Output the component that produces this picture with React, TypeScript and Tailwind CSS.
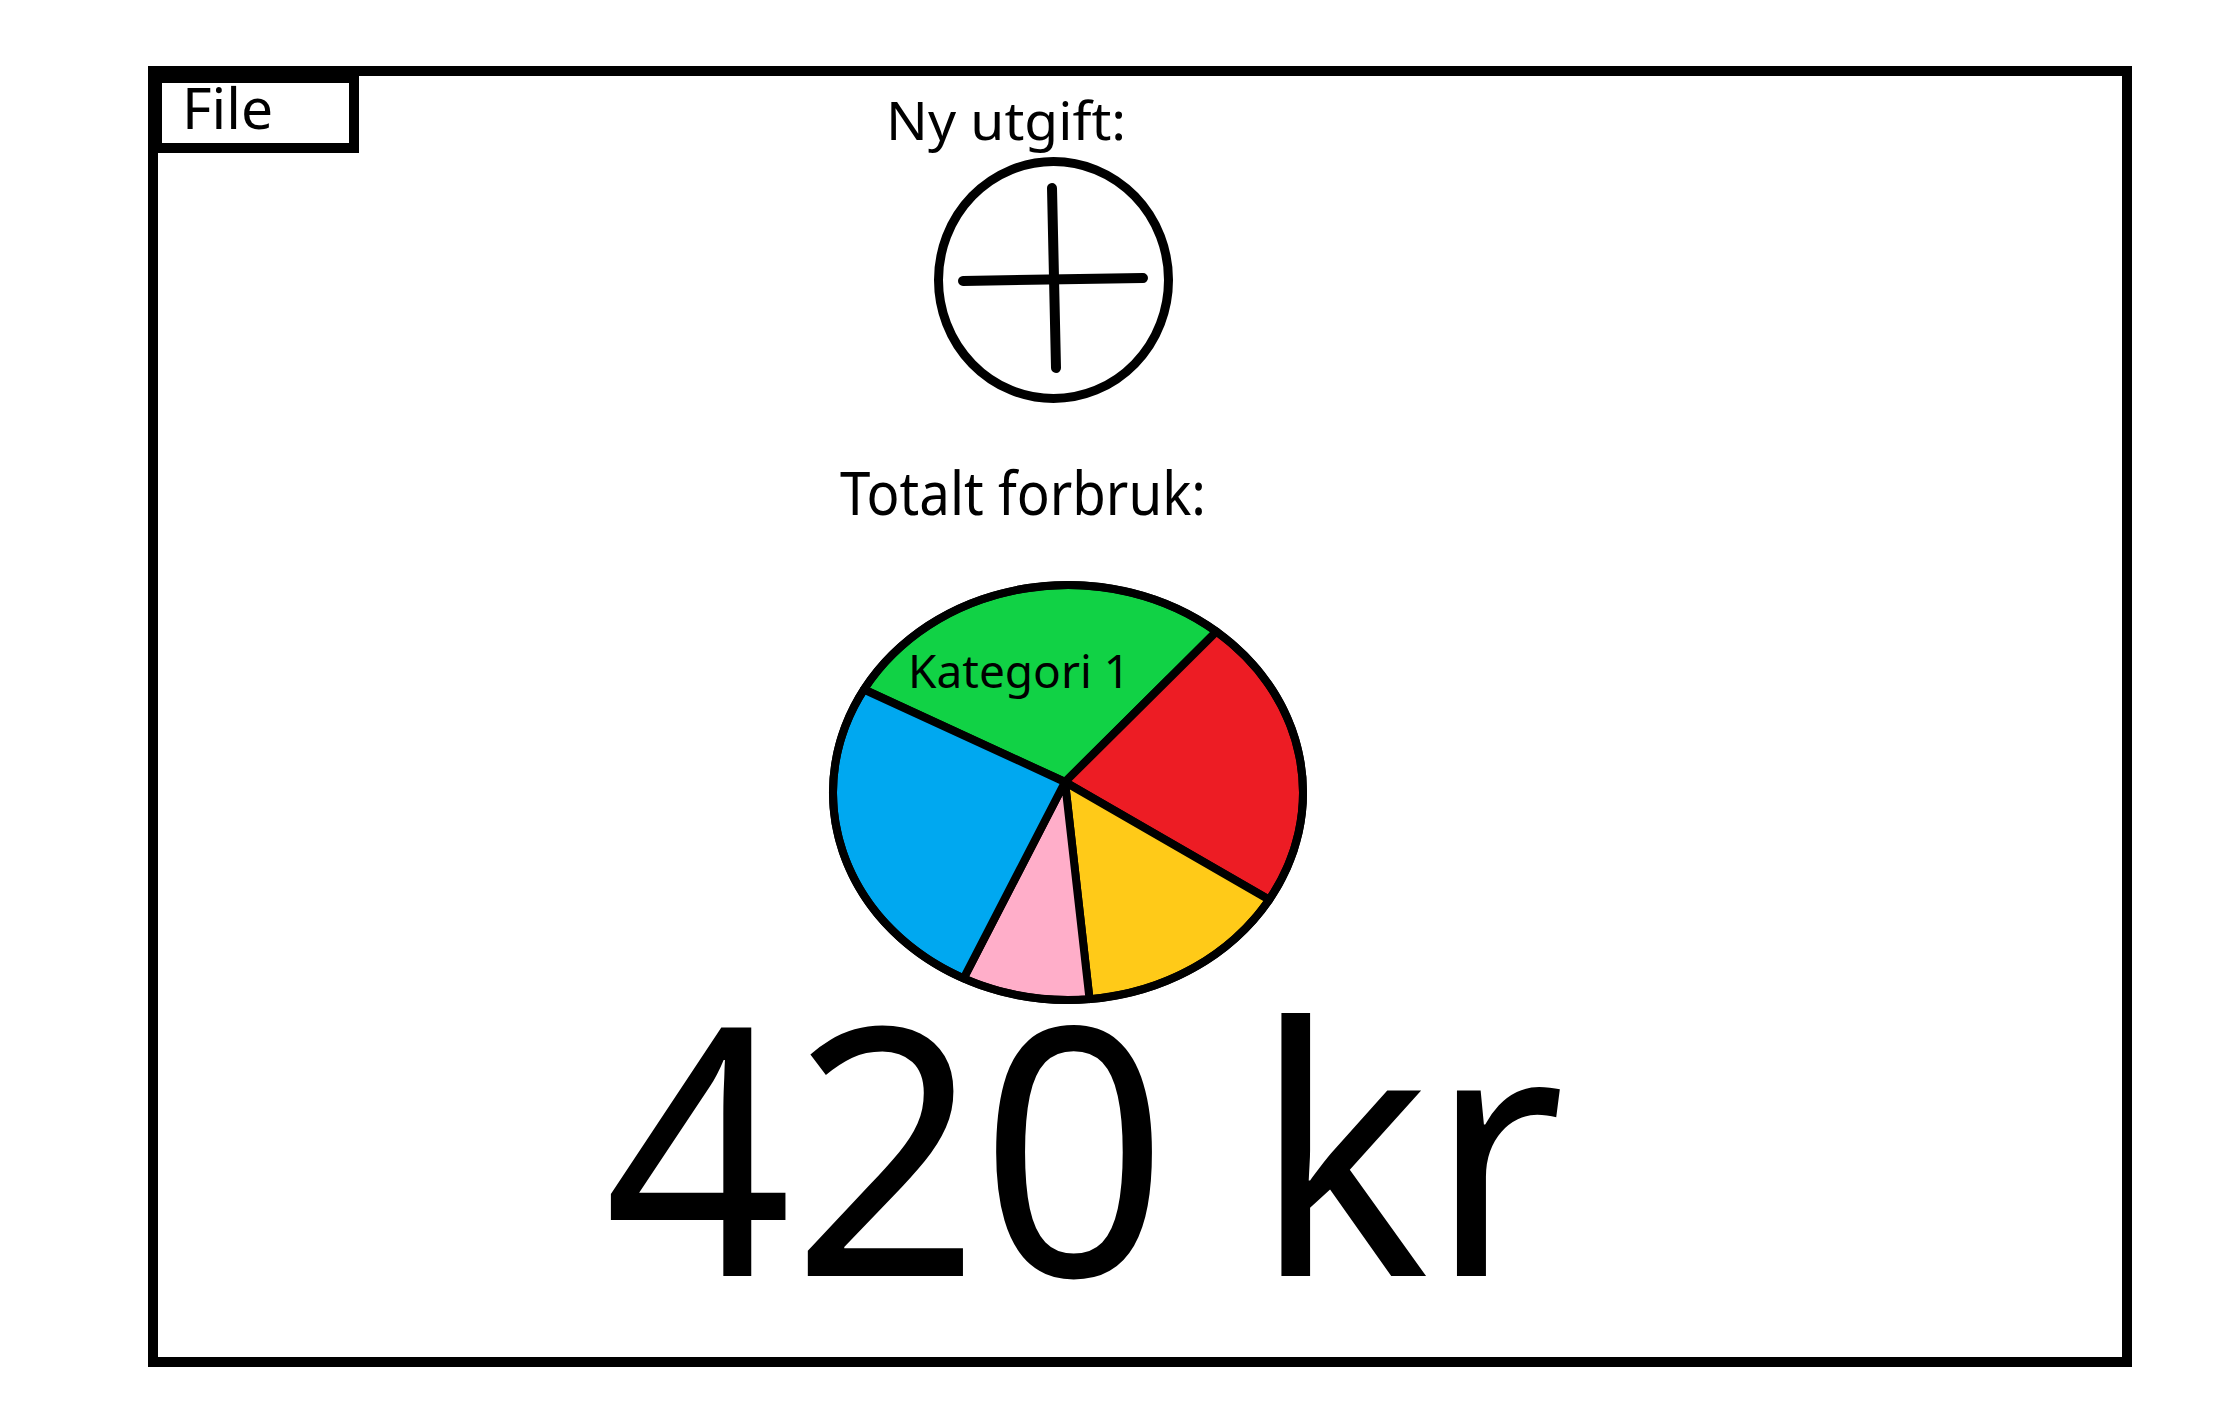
import React from 'react';

// pie geometry, in the svg's own box (824,576 on the page)
const CX = 244;
const CY = 216.5;
const RX = 235;
const RY = 207.5;
const HUB = [241, 206];

const onRim = (x: number, y: number) => {
  const t = Math.atan2((y - CY) / RY, (x - CX) / RX);
  return [CX + RX * Math.cos(t), CY + RY * Math.sin(t)];
};

const rims = {
  blueGreen: onRim(41, 114),
  greenRed: onRim(392, 56),
  redYellow: onRim(440, 321),
  yellowPink: onRim(265, 418),
  pinkBlue: onRim(141, 400),
};

const slices = [
  { from: rims.blueGreen, to: rims.greenRed, fill: '#11d245' },
  { from: rims.greenRed, to: rims.redYellow, fill: '#ed1c24' },
  { from: rims.redYellow, to: rims.yellowPink, fill: '#ffca18' },
  { from: rims.yellowPink, to: rims.pinkBlue, fill: '#ffaec9' },
  { from: rims.pinkBlue, to: rims.blueGreen, fill: '#00a8f0' },
];

const PieChart: React.FC = () => (
  <div className="relative ml-[465px] mt-[54px] h-[432px] w-[488px]">
    <svg width="488" height="432" viewBox="0 0 488 432">
      {slices.map((s, i) => (
        <path
          key={i}
          d={`M${HUB[0]} ${HUB[1]} L${s.from[0]} ${s.from[1]} A${RX} ${RY} 0 0 1 ${s.to[0]} ${s.to[1]} Z`}
          fill={s.fill}
          stroke="#000"
          strokeWidth={8}
          strokeLinejoin="round"
        />
      ))}
      <ellipse cx={CX} cy={CY} rx={RX} ry={RY} fill="none" stroke="#000" strokeWidth={8} />
    </svg>
    <span className="absolute left-[84px] top-[71px] font-['Noto_Sans',sans-serif] text-[46px] leading-none text-black">
      Kategori 1
    </span>
  </div>
);

const AddButton: React.FC = () => (
  <svg className="ml-[575px] mt-[11px]" width="240" height="246" viewBox="0 0 240 246">
    <ellipse cx="119.5" cy="123" rx="115" ry="118.5" fill="none" stroke="#000" strokeWidth="9" />
    <path d="M29 124 L209 121" stroke="#000" strokeWidth="10" strokeLinecap="round" />
    <path d="M118 31 L122 211" stroke="#000" strokeWidth="10" strokeLinecap="round" />
  </svg>
);

export default function App() {
  return (
    <div className="h-[1424px] w-[2232px] bg-white pl-[148px] pt-[66px] font-['Noto_Sans',sans-serif] text-black">
      <div className="flex h-[1301px] w-[1984px] items-start border-[10px] border-black">
        <div className="-ml-[6px] -mt-[3px] h-[80px] w-[207px] shrink-0 border-[10px] border-black pl-[20px]">
          <span className="-mt-[4px] block text-[57px] leading-none">File</span>
        </div>

        <div className="flex flex-col items-start">
          <span className="ml-[527px] mt-[18px] block origin-left scale-x-[1.06] text-[52px] leading-none">Ny utgift:</span>
          <AddButton />
          <span className="ml-[481px] mt-[59px] block origin-left scale-x-[0.91] text-[60px] leading-none">Totalt forbruk:</span>
          <PieChart />
          <span className="-mt-[39px] ml-[245px] block origin-left scale-x-[0.95] text-[346px] leading-none">420 kr</span>
        </div>
      </div>
    </div>
  );
}
